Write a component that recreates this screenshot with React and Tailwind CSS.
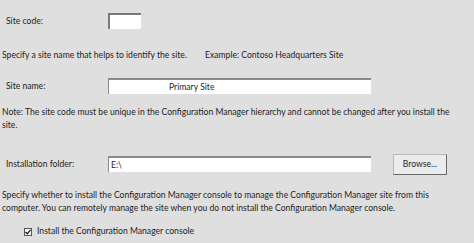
export default function App() {
  const font = { fontFamily: 'Lato, "Open Sans", sans-serif' };
  return (
    <div className="w-[474px] h-[243px] bg-[#dfdfdf] text-[#1e1e1e] text-[8.6px] leading-[13px] overflow-hidden relative whitespace-nowrap" style={font}>
      <div className="flex items-center h-[16px] mt-[13px] pl-[6px]">
        <span className="w-[102px]">Site code:</span>
        <div className="w-[33px] h-[16px] bg-white border-t-2 border-l-2 border-t-[#7a7a7a] border-l-[#7a7a7a]" />
      </div>
      <div className="flex mt-[20px] pl-[2px]">
        <span className="w-[203px]">Specify a site name that helps to identify the site.</span>
        <span>Example: Contoso Headquarters Site</span>
      </div>
      <div className="flex items-center h-[16px] mt-[16px] pl-[6px]">
        <span className="w-[102px]">Site name:</span>
        <div className="w-[263px] h-[16px] bg-white border-t-2 border-l border-t-[#8a8a8a] border-l-[#8a8a8a] flex items-center pl-[60px]">Primary Site</div>
      </div>
      <div className="mt-[12px] pl-[2px]">
        Note: The site code must be unique in the Configuration Manager hierarchy and cannot be changed after you install the<br />site.
      </div>
      <div className="flex items-center h-[20px] mt-[22px] pl-[6px]">
        <span className="w-[102px]">Installation folder:</span>
        <div className="w-[263px] h-[16px] bg-white border-t-2 border-l border-t-[#8a8a8a] border-l-[#8a8a8a] flex items-center pl-[2px]">E:\</div>
        <button className="ml-[22px] w-[54px] h-[21px] bg-[#ececec] border border-[#b8b8b8] border-r-[#6a6a6a] border-b-[#6a6a6a] text-[8.6px]" style={font}>Browse...</button>
      </div>
      <div className="mt-[15px] pl-[2px]">
        Specify whether to install the Configuration Manager console to manage the Configuration Manager site from this<br />computer. You can remotely manage the site when you do not install the Configuration Manager console.
      </div>
      <div className="flex items-center h-[13px] mt-[10px] pl-[24px]">
        <div className="w-[8px] h-[8px] bg-white border border-[#555] flex items-center justify-center mr-[5px]">
          <svg width="6" height="6" viewBox="0 0 6 6"><path d="M0.5 3 L2.3 4.8 L5.5 0.8" stroke="#111" strokeWidth="1.3" fill="none" /></svg>
        </div>
        <span>Install the Configuration Manager console</span>
      </div>
    </div>
  );
}
